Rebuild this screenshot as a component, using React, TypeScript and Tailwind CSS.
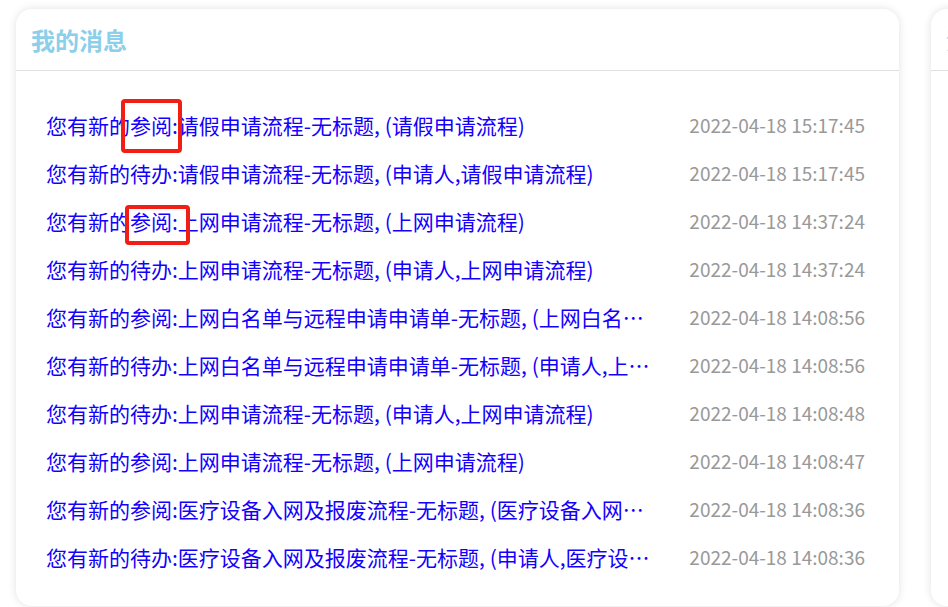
import React from "react";

const rows: { text: string; time: string }[] = [
  { text: "您有新的参阅:请假申请流程-无标题, (请假申请流程)", time: "2022-04-18 15:17:45" },
  { text: "您有新的待办:请假申请流程-无标题, (申请人,请假申请流程)", time: "2022-04-18 15:17:45" },
  { text: "您有新的参阅:上网申请流程-无标题, (上网申请流程)", time: "2022-04-18 14:37:24" },
  { text: "您有新的待办:上网申请流程-无标题, (申请人,上网申请流程)", time: "2022-04-18 14:37:24" },
  { text: "您有新的参阅:上网白名单与远程申请申请单-无标题, (上网白名单与远程申请申请单)", time: "2022-04-18 14:08:56" },
  { text: "您有新的待办:上网白名单与远程申请申请单-无标题, (申请人,上网白名单与远程申请申请单)", time: "2022-04-18 14:08:56" },
  { text: "您有新的待办:上网申请流程-无标题, (申请人,上网申请流程)", time: "2022-04-18 14:08:48" },
  { text: "您有新的参阅:上网申请流程-无标题, (上网申请流程)", time: "2022-04-18 14:08:47" },
  { text: "您有新的参阅:医疗设备入网及报废流程-无标题, (医疗设备入网及报废流程)", time: "2022-04-18 14:08:36" },
  { text: "您有新的待办:医疗设备入网及报废流程-无标题, (申请人,医疗设备入网及报废流程)", time: "2022-04-18 14:08:36" },
];

const font = { fontFamily: '"Noto Sans CJK SC", "Microsoft YaHei", sans-serif' };

export default function App() {
  return (
    <div
      className="h-[607px] w-[948px] overflow-hidden bg-white flex gap-[32px] pl-[16px] pt-[9px]"
      style={font}
    >
      <div className="relative shrink-0 w-[883px] h-[597px] bg-white rounded-[16px] shadow-[0_0_8px_rgba(0,0,0,0.12)] flex flex-col">
        <div className="h-[62px] shrink-0 border-b border-[#e0e0e0] flex items-center pl-[15px]">
          <span className="text-[24px] font-bold text-[#8ccfeb] leading-none">我的消息</span>
        </div>
        <div className="flex flex-col pt-[30px] pl-[30px] pr-[34px]">
          {rows.map((r, i) => (
            <div key={i} className="h-[48px] flex items-center justify-between gap-[20px]">
              <span className="w-[614px] truncate text-[21px] text-[#1400ff] leading-[28px]">{r.text}</span>
              <span className="text-[19px] text-[#999999] leading-[26px] whitespace-nowrap">{r.time}</span>
            </div>
          ))}
        </div>
        <div className="absolute left-[105px] top-[90px] w-[61px] h-[54px] border-[4px] border-[#f01e14] rounded-[4px]" />
        <div className="absolute left-[109px] top-[196px] w-[65px] h-[40px] border-[4px] border-[#f01e14] rounded-[4px]" />
      </div>
      <div className="shrink-0 w-[883px] h-[597px] bg-white rounded-[16px] shadow-[0_0_8px_rgba(0,0,0,0.12)] flex flex-col">
        <div className="h-[62px] shrink-0 border-b border-[#e0e0e0] flex items-center pl-[15px]">
          <span className="text-[24px] font-bold text-[#8ccfeb] leading-none">消息通知</span>
        </div>
      </div>
    </div>
  );
}
